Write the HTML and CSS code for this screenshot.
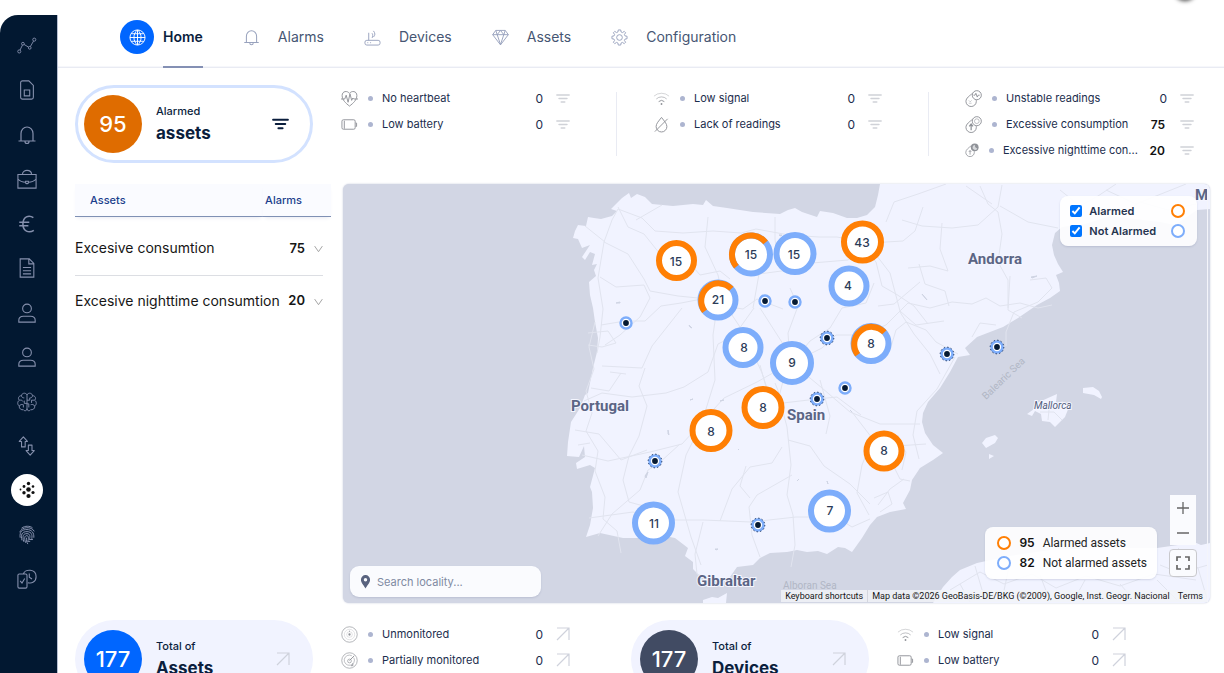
FILE: index.html
```html
<!DOCTYPE html>
<html lang="en">
<head>
<meta charset="utf-8">
<meta name="viewport" content="width=device-width, initial-scale=1">
<title>Home</title>
<link rel="stylesheet" href="styles.css">
</head>
<body>
<svg class="sprite" aria-hidden="true">
  <symbol id="filter" viewBox="0 0 16 12"><path d="M1 2h14M3.500 6h9M6 10h4" fill="none" stroke="currentColor" stroke-width="1.800" stroke-linecap="round"/></symbol>
  <symbol id="arrow" viewBox="0 0 14 14"><path d="M1 1h12v12M13 1L1 13" fill="none" stroke="currentColor" stroke-width="1.200"/></symbol>
  <symbol id="chevron" viewBox="0 0 10 8"><path d="M.7.8L5 7 9.300.8" fill="none" stroke="currentColor"/></symbol>
  <symbol id="wifi" viewBox="0 0 18 16"><g fill="none" stroke="currentColor"><path d="M1 5.500a12 12 0 0 1 16 0" opacity=".4"/><path d="M3.500 8.500a8 8 0 0 1 11 0" opacity=".6"/><path d="M6 11.300a4.500 4.500 0 0 1 6 0"/></g><circle cx="9" cy="13.800" r="1" fill="currentColor"/></symbol>
  <symbol id="battery" viewBox="0 0 18 16"><g fill="none" stroke="currentColor"><rect x="1" y="3" width="14" height="10" rx="1.500"/><path d="M3.500 4v8.500M15.500 6.500h1v3.500h-1"/></g></symbol>
  <symbol id="heart" viewBox="0 0 18 18"><g fill="none" stroke="currentColor"><path d="M9 17C5 14 1.200 10.500 1.200 5.800 1.200 1 6.800.4 9 3.600 11.200.4 16.800 1 16.800 5.800 16.800 10.500 13 14 9 17z"/><path d="M0 9.500h4l1.500-4 2 7.500 2-9 1.800 7 1.200-2.500 1 1H18"/></g></symbol>
  <symbol id="nodrop" viewBox="0 0 18 18"><g fill="none" stroke="currentColor"><path d="M9 1.500C6 5.500 3.300 8 3.300 11.200a5.700 5.700 0 0 0 11.400 0C14.700 8 12 5.500 9 1.500zM2 16.500L15.500 3"/></g></symbol>
  <symbol id="wave" viewBox="0 0 18 18"><g fill="none" stroke="currentColor"><path d="M8 3.500C5 6 1 8.500 1 12a5.500 5.500 0 0 0 11 0c0-.6 0-1-.2-1.500"/><circle cx="12.500" cy="5.500" r="4.800"/><path d="M9 5.500h1.500l1-2 1.500 4 1-2h1.500" /><path d="M4 11l1.500 1.500L7 11M4 14h3" opacity=".5"/></g></symbol>
  <symbol id="updrop" viewBox="0 0 18 18"><g fill="none" stroke="currentColor"><path d="M8 3.500C5 6 1 8.500 1 12a5.500 5.500 0 0 0 11 0c0-.6 0-1-.2-1.500"/><circle cx="12.500" cy="5.500" r="4.800"/><circle cx="12.500" cy="5.500" r="2.500" opacity=".6"/><path d="M6.500 15V9M4.500 11l2-2.500 2 2.500" stroke-width="1.300"/></g></symbol>
  <symbol id="night" viewBox="0 0 18 18"><path d="M8 3.500C5 6 1 8.500 1 12a5.500 5.500 0 0 0 11 0c0-.6 0-1-.2-1.500M6.500 15V10M5 11.500l1.500-2 1.500 2" fill="none" stroke="currentColor"/><circle cx="12.500" cy="5.500" r="5" fill="currentColor"/><path d="M13 2.500a3.200 3.200 0 1 0 2.800 4.500A3.500 3.500 0 0 1 13 2.500z" fill="#d5d7da"/></symbol>
  <symbol id="dial" viewBox="0 0 18 18"><g fill="none" stroke="currentColor"><circle cx="9" cy="9" r="8.200" opacity=".7"/><circle cx="9" cy="9" r="5.500" opacity=".25"/><circle cx="9" cy="9" r="3" opacity=".25"/><path d="M9 5v1"/></g><circle cx="9" cy="9" r="1.200" fill="currentColor"/></symbol>
  <symbol id="gauge" viewBox="0 0 18 18"><g fill="none" stroke="currentColor"><circle cx="9" cy="9" r="8.200" opacity=".7"/><path d="M13.500 6a5.400 5.400 0 1 1-2-2" opacity=".6"/><path d="M9 9l5-5M12.500 12v2.500h-2"/><circle cx="9" cy="9.500" r="2" opacity=".7"/></g></symbol>
  <symbol id="bell" viewBox="0 0 20 20"><path d="M1.500 16h17M4 16V8.500a6 6.500 0 0 1 12 0V16M8 16.500a2 2 0 0 0 4 0" fill="none" stroke="currentColor" stroke-width="1.200" stroke-linejoin="round"/></symbol>
  <symbol id="user" viewBox="0 0 20 22"><g fill="none" stroke="currentColor" stroke-width="1.200"><circle cx="10" cy="6" r="4.800"/><path d="M1 21v-2c0-3 2-4.500 5-4.500h8c3 0 5 1.500 5 4.500v2z"/></g></symbol>
  <symbol id="dot" viewBox="-8 -8 16 16"><circle r="5.500" fill="#fff" stroke="#7dadfb" stroke-width="2.400"/><circle r="2.900" fill="#061a33"/></symbol>
  <symbol id="dotd" viewBox="-8 -8 16 16"><circle r="5.500" fill="#fff" stroke="#7dadfb" stroke-width="2.600"/><circle r="6.800" fill="none" stroke="#14305f" stroke-width="1" stroke-dasharray="1.400 2.160"/><circle r="2.900" fill="#061a33"/></symbol>
</svg>

<div class="shell">
  <aside class="sidebar">
    <nav class="side-list" aria-label="Applications">
      <a class="side-item" href="#" aria-label="Analytics"><svg viewBox="0 0 22 20"><g fill="none" stroke="currentColor"><circle cx="2.500" cy="16" r="1.700"/><circle cx="6.500" cy="7.500" r="1.500"/><circle cx="14" cy="12" r="1.500"/><circle cx="19" cy="3" r="1.700"/><path d="M3.300 14.500L6 9M7.800 8.300l5 3M14.700 10.600l3.500-6"/></g></svg></a>
      <a class="side-item" href="#" aria-label="SIM cards"><svg viewBox="0 0 20 22"><path d="M3 3a2 2 0 0 1 2-2h7l5 5v13a2 2 0 0 1-2 2H5a2 2 0 0 1-2-2zM7 11h6v6.500H7z" fill="none" stroke="currentColor" stroke-width="1.200"/></svg></a>
      <a class="side-item" href="#" aria-label="Notifications"><svg><use href="#bell"/></svg></a>
      <a class="side-item" href="#" aria-label="Business"><svg viewBox="0 0 22 22"><path d="M1 6h20v15H1zM6 6c0-6 10-6 10 0M1 11c3 3.500 6 3.500 8.500 3.500M21 11c-3 3.500-6 3.500-8.500 3.500M9.500 13.500h3V15c0 1.500-3 1.500-3 0z" fill="none" stroke="currentColor" stroke-width="1.200"/></svg></a>
      <a class="side-item" href="#" aria-label="Billing"><svg viewBox="0 0 20 22"><path d="M17 4C12 .5 5.500 3 5.500 11S12 21.500 17.500 18M1.500 9h11M1.500 13h10" fill="none" stroke="currentColor" stroke-width="1.700"/></svg></a>
      <a class="side-item" href="#" aria-label="Documents"><svg viewBox="0 0 20 22"><path d="M2.500 1h10l5 5v15h-15zM12 1v5.500h5.500M5.500 10.500h9M5.500 14h9M5.500 17.500h9" fill="none" stroke="currentColor" stroke-width="1.200"/></svg></a>
      <a class="side-item" href="#" aria-label="Users"><svg><use href="#user"/></svg></a>
      <a class="side-item" href="#" aria-label="Customers"><svg><use href="#user"/></svg></a>
      <a class="side-item" href="#" aria-label="Intelligence"><svg viewBox="0 0 22 22"><path d="M11 2v18M11 3c-2-3-6-1.500-6 1C2 4 .5 7 2.500 9 0 11 .5 14 2.500 15.500 2 18.500 5 20 7 19.500c1.500 2 4 1 4-1M11 3c2-3 6-1.500 6 1 3 0 4.500 3 2.500 5 2.500 2 2 5 0 6.500.5 3-2.500 4.500-4.500 4-1.500 2-4 1-4-1M5 4c0 2 1.500 2.500 3 2.500M2.500 9c2 0 3-.5 4 1.500M2.500 15.500c1-2 3-2 4.500-1.500v3M8 9.500v3h3M17 4c0 2-1.500 2.500-3 2.500v2.500h-3M19.500 9H16v3M19.500 15.500c-1-2-3-2-4.500-1.500M11 13h2v4" fill="none" stroke="currentColor"/></svg></a>
      <a class="side-item" href="#" aria-label="Transfers"><svg viewBox="0 0 22 22"><path d="M7 1l4.500 5H9v6H5V6H2.500zM14.500 21L10 16h2.500v-6h4v6H19z" fill="none" stroke="currentColor" stroke-width="1.200" stroke-linejoin="round"/></svg></a>
      <a class="side-item side-item-on" href="#" aria-label="Monitoring" aria-current="page"><svg viewBox="0 0 20 20" fill="currentColor"><circle cx="11.500" cy="9.500" r="2.300"/><circle cx="11.500" cy="3.500" r="1.700"/><circle cx="11.500" cy="16" r="2.100"/><circle cx="7" cy="6.500" r="1.400"/><circle cx="16" cy="6.500" r="1.300"/><circle cx="7" cy="12.800" r="1.700"/><circle cx="16" cy="12.500" r="1.600"/><circle cx="3.500" cy="9.500" r=".9"/></svg></a>
      <a class="side-item" href="#" aria-label="Identity"><svg viewBox="0 0 22 22"><path d="M5 3.500c4-3 9-2.500 12-.5M3 8c2-6 13-7 16-1M3.500 14C2.500 7 6 5 11 5s8 3.500 7.500 9M5.500 17c-1.500-6-.5-9.700 5.500-9.700s6 5 5 9.200M7.500 18.500c-2-7-.5-9 3.500-9s3.500 4 2.500 6.500h4M9.500 19.500C7.500 14 8.500 11.700 11 11.700s1.500 6 .5 6.300h3M12 21c-1.500-2-2-5-1.500-7" fill="none" stroke="currentColor" stroke-width="1.100"/></svg></a>
      <a class="side-item" href="#" aria-label="Scheduled tasks"><svg viewBox="0 0 22 22"><path d="M7 5.500c1.500-6 14-6 14 3 0 5.500-5 8-9 6.500M2.500 5.500h7a1.500 1.500 0 0 1 1.500 1.500v12.500A1.500 1.500 0 0 1 9.500 21h-7A1.500 1.500 0 0 1 1 19.500V7a1.500 1.500 0 0 1 1.500-1.500zM3.500 13l2 2.500 3-5M13.500 5v4l3 2" fill="none" stroke="currentColor" stroke-width="1.200"/></svg></a>
    </nav>
  </aside>

  <div class="page">
    <button class="avatar" aria-label="Account"></button>
    <header class="topbar">
      <nav class="tabs" aria-label="Sections">
        <a class="tab tab-on" href="#" aria-current="page"><span class="tab-badge"><svg class="i16" viewBox="0 0 18 18"><path d="M9 1a8 8 0 1 0 0 16A8 8 0 0 0 9 1zM9 1v16M1 9h16M2.200 5h13.600M2.200 13h13.600M9 1C4 5 4 13 9 17M9 1c5 4 5 12 0 16" fill="none" stroke="currentColor"/></svg></span><span class="tab-text">Home</span></a>
        <a class="tab" href="#"><svg class="i16"><use href="#bell"/></svg><span class="tab-text">Alarms</span></a>
        <a class="tab" href="#"><svg class="i16" viewBox="0 0 18 18"><g fill="none" stroke="currentColor"><rect x="1" y="12" width="16" height="5" rx="2"/><path d="M5 12V4M3.500 14.500h1M6.500 14.500h1M8.500 9.500c1-1 1-4 0-5M10 8.500c2-2 2-4 0-6.500"/></g></svg><span class="tab-text">Devices</span></a>
        <a class="tab" href="#"><svg class="i16" viewBox="0 0 18 18"><path d="M4 1.500h10L17.300 6 9 16.800.7 6zM.7 6h16.600M4 1.500L5.500 6 9 16.500 12.500 6 14 1.500M5.500 6L9 1.500 12.500 6" fill="none" stroke="currentColor" stroke-linejoin="round"/></svg><span class="tab-text">Assets</span></a>
        <a class="tab" href="#"><svg class="i16" viewBox="0 0 18 18"><g fill="none" stroke="currentColor"><path d="M7.700 1h2.600l.4 2.200 1.500.6L14 2.500 15.500 4l-1.300 1.800.6 1.500 2.200.4v2.600l-2.200.4-.6 1.500 1.300 1.800-1.500 1.500-1.800-1.300-1.500.6-.4 2.200H7.700l-.4-2.200-1.500-.6L4 15.500 2.500 14l1.300-1.800-.6-1.500L1 10.300V7.700l2.200-.4.600-1.500L2.500 4 4 2.500l1.800 1.300 1.500-.6z"/><circle cx="9" cy="9" r="3"/></g></svg><span class="tab-text">Configuration</span></a>
      </nav>
    </header>

    <main class="content">
      <section class="band">
        <div class="pill pill-alarm">
          <span class="count count-orange">95</span>
          <span class="pill-text"><span class="pill-small">Alarmed</span><strong class="pill-big">assets</strong></span>
          <button class="icon-btn pill-filter" aria-label="Filter alarmed assets"><svg class="i-filter"><use href="#filter"/></svg></button>
        </div>
        <div class="stats-three">
          <ul class="stats">
            <li class="stat"><svg class="i18"><use href="#heart"/></svg><span class="bullet"></span><span class="stat-name">No heartbeat</span><span class="stat-num">0</span><button class="icon-btn" aria-label="Filter no heartbeat"><svg class="i-small"><use href="#filter"/></svg></button></li>
            <li class="stat"><svg class="i18"><use href="#battery"/></svg><span class="bullet"></span><span class="stat-name">Low battery</span><span class="stat-num">0</span><button class="icon-btn" aria-label="Filter low battery"><svg class="i-small"><use href="#filter"/></svg></button></li>
          </ul>
          <span class="rule"></span>
          <ul class="stats">
            <li class="stat"><svg class="i18"><use href="#wifi"/></svg><span class="bullet"></span><span class="stat-name">Low signal</span><span class="stat-num">0</span><button class="icon-btn" aria-label="Filter low signal"><svg class="i-small"><use href="#filter"/></svg></button></li>
            <li class="stat"><svg class="i18"><use href="#nodrop"/></svg><span class="bullet"></span><span class="stat-name">Lack of readings</span><span class="stat-num">0</span><button class="icon-btn" aria-label="Filter lack of readings"><svg class="i-small"><use href="#filter"/></svg></button></li>
          </ul>
          <span class="rule"></span>
          <ul class="stats">
            <li class="stat"><svg class="i18"><use href="#wave"/></svg><span class="bullet"></span><span class="stat-name">Unstable readings</span><span class="stat-num">0</span><button class="icon-btn" aria-label="Filter unstable readings"><svg class="i-small"><use href="#filter"/></svg></button></li>
            <li class="stat"><svg class="i18"><use href="#updrop"/></svg><span class="bullet"></span><span class="stat-name">Excessive consumption</span><span class="stat-num stat-hot">75</span><button class="icon-btn" aria-label="Filter excessive consumption"><svg class="i-small"><use href="#filter"/></svg></button></li>
            <li class="stat"><svg class="i14"><use href="#night"/></svg><span class="bullet"></span><span class="stat-name">Excessive nighttime con...</span><span class="stat-num stat-hot">20</span><button class="icon-btn" aria-label="Filter excessive nighttime consumption"><svg class="i-small"><use href="#filter"/></svg></button></li>
          </ul>
        </div>
      </section>

      <section class="middle">
        <table class="alarm-table">
          <colgroup><col><col class="col-num"><col class="col-open"></colgroup>
          <thead><tr><th class="cell-name" scope="col">Assets</th><th class="cell-alarms" scope="col" colspan="2">Alarms</th></tr></thead>
          <tbody>
            <tr><td>Excesive consumtion</td><td class="cell-num">75</td><td class="cell-open"><button class="icon-btn" aria-label="Expand excesive consumtion"><svg class="i-chev"><use href="#chevron"/></svg></button></td></tr>
            <tr><td>Excesive nighttime consumtion</td><td class="cell-num">20</td><td class="cell-open"><button class="icon-btn" aria-label="Expand excesive nighttime consumtion"><svg class="i-chev"><use href="#chevron"/></svg></button></td></tr>
          </tbody>
        </table>

        <div class="map">
          <svg class="map-art" viewBox="343 184 867 419" preserveAspectRatio="xMidYMid slice" role="img" aria-label="Map of assets in Spain">
            <g class="land">
              <path d="M588 393L593 368 597 352 598 338 595 322 593 308 590 295 589 282 596 276 594 270 597 264 592 265 595 254 590 252 585 260 582 257 590 245 582 248 578 239 573 238 575 231 578 225 586 226 588 217 594 218 601 219 612 216 617 211 611 209 614 206 622 198 629 193 631 198 637 194 645 197 648 200 652 204 673 206 693 204 703 205 706 200 713 206 727 208 753 212 780 214 788 210 795 208 802 212 817 217 820 211 833 213 847 218 857 218 867 215 875 207 878 195 880 184H1210V209L1197 210 1175 225 1160 222 1110 216 1085 224 1062 227 1055 233 1052 245 1054 255 1058 264 1063 272 1056 275 1059 283 1060 291 1050 298 1037 305 1018 318 1003 327 977 337 965 348 970 355 958 357 950 372 940 388 928 402 923 413 922 422 925 433 933 445 943 453 933 460 920 468 912 480 910 490 903 503 906 509 890 512 877 517 870 525 862 538 852 552 845 548 838 547 827 554 818 551 807 552 797 550 787 552 770 553 760 558 753 565 737 567 730 577 722 582 716 581 700 576 693 569 693 562 685 556 688 548 675 538 660 535 645 538 623 538 600 533 586 537 590 525 593 508 592 492 590 487 595 468 590 465 577 469 576 463 585 457 584 446 579 457 567 456 568 442 571 422 580 408 585 395z"/>
              <path d="M933 603L943 587 952 577 960 570 977 563 1010 556 1050 550 1100 548 1157 548 1178 545 1194 542 1201 545 1210 543V603z"/>
              <path d="M703 600L712 597 718 598 727 593 726 603H703z"/>
              <path d="M1027 414L1034 409 1037 403 1048 398 1057 394 1056 402 1069 407 1065 417 1055 427 1050 422 1042 421 1041 414 1035 411 1032 416z"/>
              <path d="M1083 388L1093 387 1099 391 1102 397 1101 399 1094 395 1083 393z"/>
              <path d="M982 443L986 438 995 435 998 438 995 443 986 448zM989 454L994 456 989 459z"/>
            </g>
            <g class="roads">
              <path d="M597 353l3-16 3-28-5-31 6-36 8-22 6-11 24 9 13 13 28 2 30-2 28 2 15-4 33 6 30 2 18 0 32 6 34-2 12-10 8-24"/>
              <path d="M604 242l24 12 16 25 6 12 28 5 30 3 22 8 13 2 14-10 26 10M618 207l10 20 16 7 16 20 28 7 12 14 20-4 10 8M636 220l26-15M585 226l20 16M600 277l16 10 28-2 6 13-10 19-20 18-15 10M601 325l24-4 20 0 16-15 20-3 26-5"/>
              <path d="M708 217l-3 30 13 28 6 28 20 30 18 40 10 30M718 300l-5 35 2 45-14 45-15 30-8 37 13 45 10 28M754 308l-20 28-16 8-10 28-24 15-18 6-34 4-30-4-18 8"/>
              <path d="M775 217l0 22 3 26 10 0 36-3 24-2 24-18M753 308l6-34 30-4M790 288l8 18-10 27 2 27M760 308l32 50M792 363l18-22 20-13 12-20 24-5 8-20M792 363l30-15 14-13 26 0 24-10 22-22 22 5 22-6 20 2 14-6 14 8 20-3 18 5 14-3M792 363l30 25 28 24 30 12 40 0M860 225l10 22 20 26 10 38 16 14 28-4M866 250l10 12 6 24 14 8 18 12 14 18"/>
              <path d="M787 365l-30 17-33 16-20 22-22 24-32 8-42 9-26-6M680 444l-22 20-10 6-8 20-28 24-14 22M785 373l-6 24 8 30 4 38-4 30 6 20 2 30-4 22M792 475l-35 20-8 12 3 28 8 22M703 520l48 2 45-5 40 0 16 10 18-8M703 520l-40 0-30-8-44 6M703 522l-8 32 2 20 14 6M788 440l22 6 14 20 26 18 20 20M852 412l20 26 24 8 30-2M890 350l6-20 10-8 20 8 10 12 22 12M898 435l-6 28 8 16 10 2M720 521l12-32 18-22 22-4 10-16M872 440l-10 25-5 28 12 22"/>
              <path d="M902 220l20 6 30 2 26-3 20-18 4-22M980 186l8 18 10 8 4 22-4 28 10 18 0 28M992 204l-26-18M1000 206l28 16 30 6M908 268l22-2 18 5-8-22 2-26M919 264l6 20 20 7 4 15M920 282l-26 22-16 2M886 222l8-20 24-8 28-10M1060 190l20 16 18-10 18-12M1106 190l30 14 30-12 20-8M1120 216l20-14 28 8 28-6M1030 280l16-2 6 10-14 14-24 10-8 20 0 14M1010 276l-2 34 14 8M996 325l-16-2-8 14M900 312l14 22 16 20 10 20M955 357l-18 32-20 22-4 24 6 24"/>
              <path d="M595 322l-6 25 5 22-8 22 6 22-6 18 12 20-3 20 10 26-2 22 14 12 4 22M602 366l40 2 10-22 30-38M610 372l16 2M645 368l-6 18 8 20-8 30-10 20-6 24 6 22 22 6M588 345l14 2 14-4-8-12-20 2M591 388l18 3 12-18M575 430l24 4 22 26 26-10M590 443l-12 2M760 365l6 22-4 26M775 383l8 20 34-4 20-2 24 18M820 380l10 36-4 18M902 470l4-18-10-14M878 505l12-16 14-10M880 512l12-8-4-12-14 6M750 498l-10-12 6-20"/>
              <path d="M950 590l30-18 24 12 28-10 24 14 30-12 34 10 34-12 42 6M975 566l10 34M1010 562l-8 38M1040 575l10 26M1085 580l-12 22M1120 584l14 16M1157 580l20 20M960 584l10 18M1178 548l20 20 10 34M1160 565l20 8 28-8M1040 412l14 0 8 8M1050 400l-2 20"/>
            </g>
            <g class="marks">
              <path d="M616 303l4-1 0 1zM689 325l3 3-2-1zM668 430l1 5-1-1zM645 476l3-4-2 6zM779 235l3 0-1 1zM922 294l5 6zM1031 277l6-1-5 2zM690 400l3-1zM720 401l4-1zM738 450l1-1zM827 481l1 3zM797 481l2-2zM715 549l3 0-2 1zM850 410l2 2z"/>
            </g>
            <g class="countries">
              <text x="571" y="411">Portugal</text>
              <text x="787" y="420">Spain</text>
              <text x="968" y="264">Andorra</text>
              <text x="697" y="586">Gibraltar</text>
              <text x="1195" y="200">M</text>
            </g>
            <g class="seas">
              <text x="783" y="589">Alboran Sea</text>
              <text transform="translate(986 400) rotate(-44)">Balearic Sea</text>
            </g>
            <text class="island" x="1034" y="409">Mallorca</text>
            <path class="map-edge" d="M1207.500 184v419"/>
            <g class="clusters">
              <g class="hot"><circle cx="676.500" cy="260.500" r="17.500"/><circle cx="862.500" cy="242" r="18.500"/><circle cx="763" cy="407.500" r="18.500"/><circle cx="711" cy="430.500" r="18.500"/><circle cx="884" cy="451" r="17.500"/></g>
              <g class="cold"><circle cx="751" cy="254.500" r="19"/><circle cx="795" cy="253.500" r="18.500"/><circle cx="849" cy="286" r="17.500"/><circle cx="718" cy="300" r="17.500"/><circle cx="743" cy="347.500" r="17.500"/><circle cx="792" cy="363" r="19"/><circle cx="871" cy="343.500" r="17.500"/><circle cx="653.500" cy="523" r="18.500"/><circle cx="829.500" cy="511" r="18.500"/></g>
              <g class="part"><path d="M736.400 266.700A19 19 0 0 1 765.600 242.300"/><path d="M704.600 311.200A17.500 17.500 0 0 1 731.400 288.800"/><path d="M857.600 354.700A17.500 17.500 0 0 1 884.400 332.300"/></g>
              <g class="nums"><text x="676" y="266">15</text><text x="751" y="259">15</text><text x="794" y="259">15</text><text x="862" y="247">43</text><text x="848" y="290">4</text><text x="718" y="304">21</text><text x="744" y="352">8</text><text x="792" y="367">9</text><text x="871" y="348">8</text><text x="763" y="412">8</text><text x="711" y="436">8</text><text x="884" y="455">8</text><text x="654" y="528">11</text><text x="830" y="515">7</text></g>
            </g>
            <g>
              <use href="#dot" x="757" y="293" width="16" height="16"/><use href="#dot" x="787" y="294" width="16" height="16"/><use href="#dot" x="618" y="315" width="16" height="16"/><use href="#dot" x="837" y="380" width="16" height="16"/>
              <use href="#dotd" x="819" y="330" width="16" height="16"/><use href="#dotd" x="809" y="391" width="16" height="16"/><use href="#dotd" x="939" y="346" width="16" height="16"/><use href="#dotd" x="989" y="339" width="16" height="16"/><use href="#dotd" x="647" y="453" width="16" height="16"/><use href="#dotd" x="750" y="517" width="16" height="16"/>
            </g>
          </svg>

          <div class="toggles">
            <label class="toggle"><input type="checkbox" checked><span>Alarmed</span><i class="ring ring-hot"></i></label>
            <label class="toggle"><input type="checkbox" checked><span>Not Alarmed</span><i class="ring"></i></label>
          </div>

          <label class="search">
            <svg class="i-pin" viewBox="0 0 12 16"><path d="M6 1a5 5 0 0 0-5 5c0 3.500 3.500 6.500 5 9.500 1.500-3 5-6 5-9.500a5 5 0 0 0-5-5zm0 3.200a1.900 1.900 0 1 1 0 3.800 1.900 1.900 0 0 1 0-3.800z" fill="currentColor"/></svg>
            <input type="text" placeholder="Search locality..." aria-label="Search locality">
          </label>

          <div class="corner">
            <div class="totals">
              <i class="ring ring-hot"></i><b>95</b><span>Alarmed assets</span>
              <i class="ring"></i><b>82</b><span>Not alarmed assets</span>
            </div>
            <div class="controls">
              <div class="zoomer">
                <button aria-label="Zoom in"><svg viewBox="0 0 12 12"><path d="M0 6h12M6 0v12" stroke="currentColor" stroke-width="1.300"/></svg></button>
                <button aria-label="Zoom out"><svg viewBox="0 0 12 12"><path d="M0 6h12" stroke="currentColor" stroke-width="1.300"/></svg></button>
              </div>
              <button class="full" aria-label="Toggle fullscreen"><svg viewBox="0 0 14 14"><path d="M1 5V1h4M9 1h4v4M13 9v4H9M5 13H1V9" fill="none" stroke="currentColor" stroke-width="1.700"/></svg></button>
            </div>
          </div>

          <div class="credits">
            <button>Keyboard shortcuts</button>
            <span>Map data ©2026 GeoBasis-DE/BKG (©2009), Google, Inst. Geogr. Nacional</span>
            <a href="#">Terms</a>
          </div>
        </div>
      </section>

      <section class="bottom">
        <div class="group">
          <div class="pill">
            <span class="count count-blue">177</span>
            <span class="pill-text"><span class="pill-small">Total of</span><strong class="pill-big">Assets</strong></span>
            <a class="go" href="#" aria-label="All assets"><svg class="i14"><use href="#arrow"/></svg></a>
          </div>
          <ul class="stats">
            <li class="stat"><svg class="i18"><use href="#dial"/></svg><span class="bullet"></span><span class="stat-name">Unmonitored</span><span class="stat-num">0</span><a class="go" href="#" aria-label="Unmonitored"><svg class="i14"><use href="#arrow"/></svg></a></li>
            <li class="stat"><svg class="i18"><use href="#gauge"/></svg><span class="bullet"></span><span class="stat-name">Partially monitored</span><span class="stat-num">0</span><a class="go" href="#" aria-label="Partially monitored"><svg class="i14"><use href="#arrow"/></svg></a></li>
          </ul>
        </div>
        <div class="group">
          <div class="pill">
            <span class="count count-slate">177</span>
            <span class="pill-text"><span class="pill-small">Total of</span><strong class="pill-big">Devices</strong></span>
            <a class="go" href="#" aria-label="All devices"><svg class="i14"><use href="#arrow"/></svg></a>
          </div>
          <ul class="stats">
            <li class="stat"><svg class="i18"><use href="#wifi"/></svg><span class="bullet"></span><span class="stat-name">Low signal</span><span class="stat-num">0</span><a class="go" href="#" aria-label="Low signal devices"><svg class="i14"><use href="#arrow"/></svg></a></li>
            <li class="stat"><svg class="i18"><use href="#battery"/></svg><span class="bullet"></span><span class="stat-name">Low battery</span><span class="stat-num">0</span><a class="go" href="#" aria-label="Low battery devices"><svg class="i14"><use href="#arrow"/></svg></a></li>
          </ul>
        </div>
      </section>
    </main>
  </div>
</div>
</body>
</html>
```

FILE: styles.css
```css
* { box-sizing: border-box; }
body { margin: 0; background: #fff; color: #061a33; font-family: Inter, "Liberation Sans", sans-serif; font-size: 11px; }
svg { display: block; }
button { border: 0; padding: 0; margin: 0; background: none; font: inherit; color: inherit; cursor: pointer; }
a { color: inherit; text-decoration: none; }
ul { list-style: none; margin: 0; padding: 0; }
.sprite { position: absolute; width: 0; height: 0; }

.shell { display: flex; height: 100vh; overflow: hidden; }

/* Sidebar */
.sidebar { flex: none; width: 58px; margin-top: 15px; padding-top: 15px; background: #021831; border-top-left-radius: 18px; border-right: 1px solid #b7bfd2; }
.side-list { display: flex; flex-direction: column; align-items: center; justify-content: space-between; height: 84vh; padding-right: 3px; }
.side-item { display: grid; place-items: center; width: 32px; height: 32px; color: #8690ad; border-radius: 50%; }
.side-item svg { width: 20px; height: 20px; }
.side-item-on { background: #fff; color: #111; }

/* Header */
.page { position: relative; flex: 1; min-width: 0; }
.avatar { position: absolute; top: -22px; right: 28px; width: 22px; height: 22px; border-radius: 50%; background: #777; box-shadow: 0 1px 4px rgba(0, 0, 0, .7); }
.topbar { height: 68px; padding: 20px 0 0 62px; border-bottom: 1px solid #e9ebf3; box-shadow: inset 0 -1px #f6f7fb; }
.tabs { display: flex; gap: 40px; }
.tab { position: relative; display: flex; align-items: center; gap: 18px; height: 34px; color: #465673; font-size: 14px; }
.tab svg { color: #98a2bd; }
.tab-text { padding-bottom: 2px; }
.tab-on { gap: 9px; color: #0b1e3d; font-weight: 600; }
.tab-badge { display: grid; place-items: center; width: 34px; height: 34px; border-radius: 50%; background: #0066ff; }
.tab .tab-badge svg { color: #fff; }
.tab-on::after { content: ""; position: absolute; left: 43px; right: 0; bottom: -14px; height: 2px; background: #8490b4; }
.i16 { width: 17px; height: 17px; }
.i18 { width: 17px; height: 17px; color: #8f9298; }
.i14 { width: 14px; height: 14px; }

/* Cards and counters */
.content { padding: 17px 14px 0 17px; }
.band { display: flex; gap: 28px; height: 99px; padding-right: 16px; }
.pill { flex: none; display: flex; align-items: center; width: 238px; height: 78px; padding: 0 23px 0 9px; border-radius: 39px; background: #f1f3ff; color: #0b1e3d; }
.pill-alarm { border: 3px solid #d3e2ff; background: #fff; padding: 0 21px 0 6px; }
.count { display: grid; place-items: center; width: 58px; height: 58px; border-radius: 50%; color: #fff; font-size: 22px; font-weight: 500; }
.count-orange { background: #df6c00; }
.count-blue { background: #0066ff; }
.count-slate { background: #414b63; }
.pill-text { display: grid; gap: 2px; flex: 1; padding-left: 14px; }
.pill-small { font-size: 11px; line-height: 16px; font-weight: 500; }
.pill-big { font-size: 17px; line-height: 24px; font-weight: 700; }
.i-filter { width: 17px; height: 14px; }
.i-small { width: 14px; height: 11px; color: #d0d2d8; }
.go { color: #cfd2dc; }
.stats-three { flex: 1; display: grid; grid-template-columns: minmax(0, 1fr) auto minmax(0, 1fr) auto minmax(0, 1fr); min-width: 0; }
.rule { width: 1px; height: 64px; margin: 7px 36px 0 46px; background: #e9ebf3; }
.stats { display: grid; grid-template-columns: minmax(0, 1fr); align-content: start; gap: 8px; min-width: 0; padding-top: 4px; }
.stat { display: flex; align-items: center; height: 18px; color: #1b2d4d; }
.stat svg { flex: none; }
.stat > .i14 { color: #8f9298; }
.bullet { flex: none; width: 5px; height: 5px; margin: 0 9px 0 10px; border-radius: 50%; background: #adb5d0; }
.stat-name { flex: 1; min-width: 0; white-space: nowrap; line-height: 18px; }
.stat-num { margin-right: 13px; font-size: 12px; }
.stat-hot { margin-right: 15px; color: #111; font-weight: 600; }

/* Alarm list */
.middle { display: grid; grid-template-columns: 256px minmax(0, 1fr); gap: 12px; align-items: start; }
.alarm-table { width: 100%; table-layout: fixed; border-collapse: separate; border-spacing: 0; }
.col-num { width: 42px; }
.col-open { width: 26px; }
.alarm-table th { height: 33px; padding: 0; background: #fafbff; border-bottom: 1px solid #7f90b4; box-shadow: 0 3px 4px -2px #e8eaf2; color: #1c3f8c; font-weight: 500; text-align: left; }
.alarm-table .cell-name { padding-left: 15px; }
.alarm-table .cell-alarms { padding-right: 29px; text-align: right; }
.alarm-table td { height: 48px; padding: 0; color: #161616; font-size: 14px; white-space: nowrap; }
.alarm-table tbody tr:first-child td { height: 59px; padding-top: 2px; background: linear-gradient(#dcdee3, #dcdee3) left bottom / 100% 1px no-repeat; }
.alarm-table tbody tr:first-child .cell-open { background-size: 18px 1px; }
.alarm-table .cell-num { text-align: right; font-size: 13px; font-weight: 600; }
.alarm-table .cell-open { padding-left: 9px; }
.i-chev { width: 9px; height: 8px; color: #9b9b9b; }

/* Map */
.map { position: relative; aspect-ratio: 867 / 419; overflow: hidden; border-radius: 6px; background: #d2d6e4; box-shadow: 0 0 2px #c3c8da; }
.map-art { width: 100%; height: 100%; }
.land { fill: #f1f3ff; }
.roads { fill: none; stroke: #e1e4ef; stroke-width: 1; stroke-linejoin: round; }
.marks { fill: #cfd4e3; stroke: #cfd4e3; }
.map-edge { stroke: #f4f5fb; stroke-width: 1; }
.countries { font: 700 15px Roboto, sans-serif; fill: #5b6585; stroke: #f5f6ff; stroke-width: 2; paint-order: stroke; }
.seas { font: 10px Roboto, sans-serif; fill: #b1b6c5; }
.island { font: italic 10px Roboto, sans-serif; fill: #525d7c; stroke: #f5f6ff; stroke-width: 2; paint-order: stroke; }
.clusters circle { fill: #fff; stroke-width: 6; }
.hot { stroke: #ff7f04; }
.cold { stroke: #7dadfb; }
.part { fill: none; stroke: #ff7f04; stroke-width: 6; }
.nums { font: 500 12px Inter, sans-serif; fill: #2b3b57; text-anchor: middle; }

.toggles { position: absolute; top: 12px; right: 13px; display: grid; gap: 4px; padding: 7px 12px 7px 10px; border-radius: 8px; background: rgba(255, 255, 255, .9); color: #25344f; font-weight: 600; box-shadow: 0 1px 2px rgba(90, 100, 140, .2); }
.toggle { display: flex; align-items: center; height: 16px; }
.toggle span { flex: 1; padding: 0 15px 0 7px; }
.toggle input { width: 12px; height: 12px; margin: 0; accent-color: #0075ff; }
.ring { width: 14px; height: 14px; border: 2px solid #7dadfb; border-radius: 50%; background: #fff; }
.ring-hot { border-color: #ff7f04; }

.search { position: absolute; left: 7px; bottom: 6px; display: flex; align-items: center; gap: 6px; width: 191px; height: 31px; padding: 0 10px; border-radius: 9px; background: #fafbfe; color: #59637f; box-shadow: 0 1px 2px rgba(90, 100, 140, .2); }
.search input { flex: 1; min-width: 0; border: 0; padding: 0; outline: 0; background: none; font: 11px Inter, sans-serif; color: #33405f; }
.search input::placeholder { color: #808aa2; opacity: 1; }
.i-pin { width: 11px; height: 15px; }

.corner { position: absolute; right: 13px; bottom: 24px; display: flex; align-items: flex-end; gap: 12px; }
.totals { display: grid; grid-template-columns: 14px auto auto; align-items: center; column-gap: 8px; row-gap: 4px; padding: 8px 10px 8px 12px; border-radius: 8px; background: rgba(255, 255, 255, .9); font: 12px/16px Roboto, sans-serif; color: #242424; box-shadow: 0 1px 2px rgba(90, 100, 140, .2); }
.totals b { font: 600 12px/16px Inter, sans-serif; text-align: right; color: #111; }
.controls { display: grid; justify-items: center; gap: 4px; padding-bottom: 2px; color: #666; }
.zoomer { display: grid; background: #fafbfe; }
.zoomer button { display: grid; place-items: center; width: 26px; height: 25px; }
.zoomer svg { width: 12px; height: 12px; }
.full { display: grid; place-items: center; width: 28px; height: 28px; border: 1px solid #c9c9cd; border-radius: 4px; background: #fafbfe; }
.full svg { width: 14px; height: 14px; }
.credits { position: absolute; right: 3px; bottom: 1px; display: flex; height: 12px; background: rgba(243, 244, 248, .8); color: #161616; font: 9px/12px Roboto, sans-serif; white-space: nowrap; }
.credits > * { padding: 0 4px; }
.credits span { border-left: 1px solid #d4d6de; }

/* Totals */
.bottom { display: flex; gap: 61px; padding-top: 17px; }
.group { flex: none; display: grid; grid-template-columns: 238px 229px; gap: 28px; }
.group .stats { padding-top: 5px; }
```
